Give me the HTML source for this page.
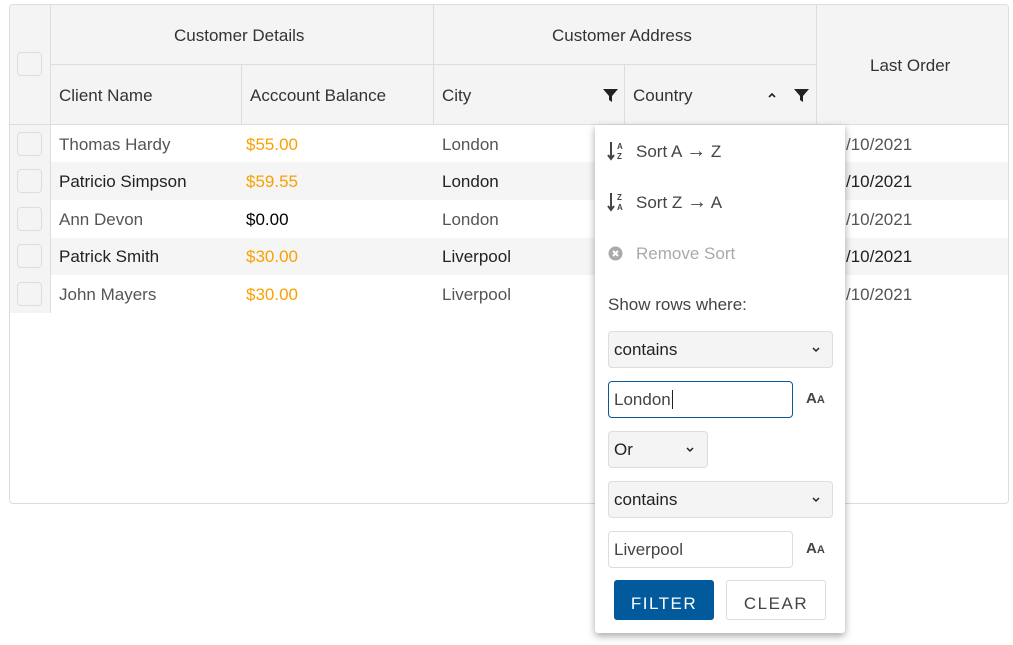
<!DOCTYPE html>
<html><head><style>
*{box-sizing:border-box;margin:0;padding:0}
body{width:1013px;height:645px;background:#fff;font-family:"Liberation Sans",sans-serif;font-size:17px;color:#333;position:relative;overflow:hidden}
.a{position:absolute}
.grid{left:9px;top:4px;width:1000px;height:500px;border:1px solid #ddd;border-radius:4px;overflow:hidden}
.hd{background:#f4f4f4}
.t{position:absolute;white-space:nowrap}
.cb{position:absolute;width:25px;height:24px;border:1px solid #ddd;border-radius:4px;background:#f4f4f4}
.pop{left:595px;top:125px;width:250px;height:508px;background:#fff;box-shadow:0 3px 8px rgba(0,0,0,.35);border-radius:0 0 3px 3px}
.sel{position:absolute;background:#f4f4f4;border:1px solid #ddd;border-radius:4px}
.inp{position:absolute;background:#fff;border:1px solid #ddd;border-radius:4px}
.ar{font-size:20px;line-height:17px}
</style></head><body>
<div class="a grid">
 <div class="a hd" style="left:0;top:0;width:1000px;height:120px;border-bottom:1px solid #ddd"></div>
 <div class="a hd" style="left:0;top:120px;width:41px;height:188px;border-right:1px solid #ddd"></div>
 <div class="a" style="left:40px;top:0;width:1px;height:120px;background:#ddd"></div>
 <div class="a" style="left:41px;top:59px;width:766px;height:1px;background:#ddd"></div>
 <div class="a" style="left:423px;top:0;width:1px;height:120px;background:#ddd"></div>
 <div class="a" style="left:806px;top:0;width:1px;height:120px;background:#ddd"></div>
 <div class="a" style="left:231px;top:60px;width:1px;height:60px;background:#ddd"></div>
 <div class="a" style="left:614px;top:60px;width:1px;height:60px;background:#ddd"></div>
 <div class="a" style="left:41px;top:157px;width:958px;height:38px;background:#f5f5f5"></div>
 <div class="a" style="left:41px;top:233px;width:958px;height:37px;background:#f5f5f5"></div>
</div>
<div class="cb" style="left:17px;top:52px"></div>
<div class="cb" style="left:17px;top:132px"></div>
<div class="cb" style="left:17px;top:169px"></div>
<div class="cb" style="left:17px;top:207px"></div>
<div class="cb" style="left:17px;top:244px"></div>
<div class="cb" style="left:17px;top:282px"></div>
<div class="t" style="left:174px;top:26px">Customer Details</div>
<div class="t" style="left:552px;top:26px">Customer Address</div>
<div class="t" style="left:870px;top:56px">Last Order</div>
<div class="t" style="left:59px;top:86px">Client Name</div>
<div class="t" style="left:250px;top:86px">Acccount Balance</div>
<div class="t" style="left:442px;top:86px">City</div>
<div class="t" style="left:633px;top:86px">Country</div>
<svg class="a" style="left:603px;top:88px" width="15" height="15" viewBox="0 0 15 15"><path d="M0 1h15L9 8v6l-3-2V8z" fill="#222"/></svg>
<svg class="a" style="left:794px;top:88px" width="15" height="15" viewBox="0 0 15 15"><path d="M0 1h15L9 8v6l-3-2V8z" fill="#222"/></svg>
<svg class="a" style="left:767px;top:91px" width="10" height="8" viewBox="0 0 10 8"><path d="M2 6l3-3 3 3" fill="none" stroke="#222" stroke-width="1.6"/></svg>
<div class="t" style="left:59px;top:135px;color:#555">Thomas Hardy</div>
<div class="t" style="left:59px;top:172px;color:#222">Patricio Simpson</div>
<div class="t" style="left:59px;top:210px;color:#555">Ann Devon</div>
<div class="t" style="left:59px;top:247px;color:#222">Patrick Smith</div>
<div class="t" style="left:59px;top:285px;color:#555">John Mayers</div>
<div class="t" style="left:246px;top:135px;color:#f8a100">$55.00</div>
<div class="t" style="left:246px;top:172px;color:#f8a100">$59.55</div>
<div class="t" style="left:246px;top:210px;color:#000">$0.00</div>
<div class="t" style="left:246px;top:247px;color:#f8a100">$30.00</div>
<div class="t" style="left:246px;top:285px;color:#f8a100">$30.00</div>
<div class="t" style="left:442px;top:135px;color:#555">London</div>
<div class="t" style="left:442px;top:172px;color:#222">London</div>
<div class="t" style="left:442px;top:210px;color:#555">London</div>
<div class="t" style="left:442px;top:247px;color:#222">Liverpool</div>
<div class="t" style="left:442px;top:285px;color:#555">Liverpool</div>
<div class="t" style="left:846px;top:135px;color:#555">/10/2021</div>
<div class="t" style="left:846px;top:172px;color:#222">/10/2021</div>
<div class="t" style="left:846px;top:210px;color:#555">/10/2021</div>
<div class="t" style="left:846px;top:247px;color:#222">/10/2021</div>
<div class="t" style="left:846px;top:285px;color:#555">/10/2021</div>

<div class="a pop">
 <svg class="a" style="left:12px;top:16px" width="18" height="20" viewBox="0 0 18 20"><path d="M4 1v16M1 14l3 4 3-4" fill="none" stroke="#444" stroke-width="2"/><text x="10" y="8" font-size="8" font-family="Liberation Sans" font-weight="bold" fill="#444">A</text><text x="10" y="18" font-size="8" font-family="Liberation Sans" font-weight="bold" fill="#444">Z</text></svg>
 <div class="t" style="left:41px;top:17px;color:#444">Sort A <span class="ar">→</span> Z</div>
 <svg class="a" style="left:12px;top:67px" width="18" height="20" viewBox="0 0 18 20"><path d="M4 1v16M1 14l3 4 3-4" fill="none" stroke="#444" stroke-width="2"/><text x="10" y="8" font-size="8" font-family="Liberation Sans" font-weight="bold" fill="#444">Z</text><text x="10" y="18" font-size="8" font-family="Liberation Sans" font-weight="bold" fill="#444">A</text></svg>
 <div class="t" style="left:41px;top:68px;color:#444">Sort Z <span class="ar">→</span> A</div>
 <svg class="a" style="left:13px;top:121px" width="15" height="15" viewBox="0 0 15 15"><circle cx="7.5" cy="7.5" r="7" fill="#aaa"/><path d="M5 5l5 5M10 5l-5 5" stroke="#fff" stroke-width="2"/></svg>
 <div class="t" style="left:41px;top:119px;color:#aaa">Remove Sort</div>
 <div class="t" style="left:13px;top:170px;color:#444">Show rows where:</div>
 <div class="sel" style="left:13px;top:206px;width:225px;height:37px"><span class="t" style="left:5px;top:8px;color:#222">contains</span><svg class="a" style="left:202px;top:14px" width="10" height="8"><path d="M2 2l3 3 3-3" fill="none" stroke="#222" stroke-width="1.5"/></svg></div>
 <div class="inp" style="left:13px;top:256px;width:185px;height:37px;border-color:#0a5894"><span class="t" style="left:5px;top:8px;color:#444">London<span style="border-left:1px solid #222;margin-left:1px"></span></span></div>
 <div class="t" style="left:211px;top:265px;font-weight:bold;color:#444;font-size:15px">A<span style="font-size:11px">A</span></div>
 <div class="sel" style="left:13px;top:306px;width:100px;height:37px"><span class="t" style="left:5px;top:8px;color:#222">Or</span><svg class="a" style="left:76px;top:14px" width="10" height="8"><path d="M2 2l3 3 3-3" fill="none" stroke="#222" stroke-width="1.5"/></svg></div>
 <div class="sel" style="left:13px;top:356px;width:225px;height:37px"><span class="t" style="left:5px;top:8px;color:#222">contains</span><svg class="a" style="left:202px;top:14px" width="10" height="8"><path d="M2 2l3 3 3-3" fill="none" stroke="#222" stroke-width="1.5"/></svg></div>
 <div class="inp" style="left:13px;top:406px;width:185px;height:37px"><span class="t" style="left:5px;top:8px;color:#444">Liverpool</span></div>
 <div class="t" style="left:211px;top:415px;font-weight:bold;color:#444;font-size:15px">A<span style="font-size:11px">A</span></div>
 <div class="a" style="left:19px;top:455px;width:100px;height:40px;background:#005a9b;border-radius:3px;color:#fff;text-align:center;line-height:47px;letter-spacing:1.5px">FILTER</div>
 <div class="a" style="left:131px;top:455px;width:100px;height:40px;border:1px solid #ddd;border-radius:3px;color:#444;text-align:center;line-height:45px;letter-spacing:1.5px">CLEAR</div>
</div>
</body></html>
